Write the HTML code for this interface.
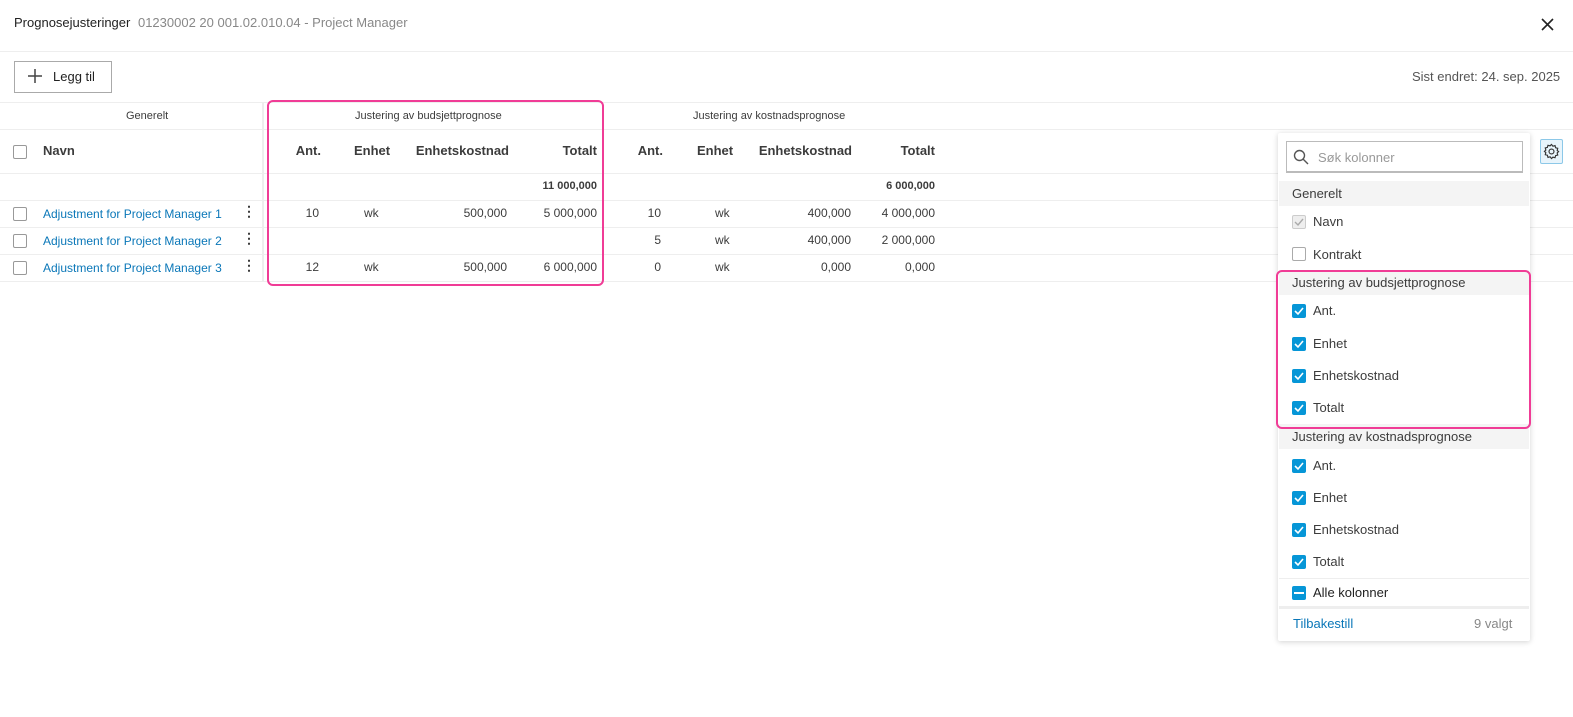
<!DOCTYPE html>
<html><head><meta charset="utf-8"><style>
*{box-sizing:border-box;margin:0;padding:0}
body{width:1573px;height:717px;background:#fff;font-family:"Liberation Sans",sans-serif;color:#3c3c3c;position:relative;overflow:hidden;font-size:12px}
.a{position:absolute;white-space:nowrap}
.hl{position:absolute;left:0;right:0;height:1px;background:#eee}
.cb{position:absolute;width:14px;height:14px;border:1px solid #999;border-radius:2px;background:#fff}
.bcb{position:absolute;left:1292px;width:14px;height:14px;border-radius:2px;background:#0696d7}
.bcb svg{position:absolute;left:2px;top:2px}
.r{text-align:right}
.b{font-weight:bold;color:#3c3c3c}
.lnk{color:#0a77b8}
.pi{position:absolute;left:1313px;font-size:13px;color:#3c3c3c}
.ph{position:absolute;left:1279px;width:250px;height:25px;background:#f4f4f4;font-size:13px;padding:5px 0 0 13px;color:#3c3c3c}
</style></head><body>
<div class="a" style="left:14px;top:15px;font-size:13px;color:#222">Prognosejusteringer <span style="color:#888;margin-left:4px">01230002 20 001.02.010.04 - Project Manager</span></div>
<svg class="a" style="left:1541px;top:18px" width="13" height="13" viewBox="0 0 13 13"><path d="M1 1L12 12M12 1L1 12" stroke="#222" stroke-width="1.6"/></svg>
<div class="hl" style="top:51px"></div>
<div class="a" style="left:14px;top:61px;width:98px;height:32px;border:1px solid #aaa;"></div>
<svg class="a" style="left:27px;top:68px" width="16" height="16"><path d="M8 1V15M1 8H15" stroke="#444" stroke-width="1.5"/></svg>
<div class="a" style="left:53px;top:69px;font-size:13px;color:#222">Legg til</div>
<div class="a" style="left:1412px;top:69px;font-size:13px;color:#555">Sist endret: 24. sep. 2025</div>
<div class="hl" style="top:102px"></div>
<div class="hl" style="top:129px"></div>
<div class="hl" style="top:173px"></div>
<div class="hl" style="top:200px"></div>
<div class="hl" style="top:227px"></div>
<div class="hl" style="top:254px"></div>
<div class="hl" style="top:281px"></div>
<div class="a" style="left:262px;top:102px;width:2px;height:179px;background:#eee"></div>
<div class="a" style="left:126px;top:110px;font-size:11px">Generelt</div>
<div class="a" style="left:355px;top:110px;font-size:11px">Justering av budsjettprognose</div>
<div class="a" style="left:693px;top:110px;font-size:11px">Justering av kostnadsprognose</div>
<div class="cb" style="left:13px;top:145px"></div>
<div class="a b" style="left:43px;top:143px;font-size:13px">Navn</div>
<div class="a b" style="right:1252px;top:143px;font-size:13px">Ant.</div>
<div class="a b" style="left:354px;top:143px;font-size:13px">Enhet</div>
<div class="a b" style="right:1064px;top:143px;font-size:13px">Enhetskostnad</div>
<div class="a b" style="right:976px;top:143px;font-size:13px">Totalt</div>
<div class="a b" style="right:910px;top:143px;font-size:13px">Ant.</div>
<div class="a b" style="left:697px;top:143px;font-size:13px">Enhet</div>
<div class="a b" style="right:721px;top:143px;font-size:13px">Enhetskostnad</div>
<div class="a b" style="right:638px;top:143px;font-size:13px">Totalt</div>
<div class="a b" style="right:976px;top:180px;font-size:11px">11 000,000</div>
<div class="a b" style="right:638px;top:180px;font-size:11px">6 000,000</div>

<div class="cb" style="left:13px;top:207px"></div>
<div class="a lnk" style="left:43px;top:207px">Adjustment for Project Manager 1</div>
<div class="a" style="left:242px;top:203px;font-size:14px;font-weight:bold">⋮</div>
<div class="a" style="right:1254px;top:206px">10</div><div class="a" style="left:364px;top:206px">wk</div><div class="a" style="right:1066px;top:206px">500,000</div><div class="a" style="right:976px;top:206px">5 000,000</div>
<div class="a" style="right:912px;top:206px">10</div><div class="a" style="left:715px;top:206px">wk</div><div class="a" style="right:722px;top:206px">400,000</div><div class="a" style="right:638px;top:206px">4 000,000</div>

<div class="cb" style="left:13px;top:234px"></div>
<div class="a lnk" style="left:43px;top:234px">Adjustment for Project Manager 2</div>
<div class="a" style="left:242px;top:230px;font-size:14px;font-weight:bold">⋮</div>
<div class="a" style="right:912px;top:233px">5</div><div class="a" style="left:715px;top:233px">wk</div><div class="a" style="right:722px;top:233px">400,000</div><div class="a" style="right:638px;top:233px">2 000,000</div>

<div class="cb" style="left:13px;top:261px"></div>
<div class="a lnk" style="left:43px;top:261px">Adjustment for Project Manager 3</div>
<div class="a" style="left:242px;top:257px;font-size:14px;font-weight:bold">⋮</div>
<div class="a" style="right:1254px;top:260px">12</div><div class="a" style="left:364px;top:260px">wk</div><div class="a" style="right:1066px;top:260px">500,000</div><div class="a" style="right:976px;top:260px">6 000,000</div>
<div class="a" style="right:912px;top:260px">0</div><div class="a" style="left:715px;top:260px">wk</div><div class="a" style="right:722px;top:260px">0,000</div><div class="a" style="right:638px;top:260px">0,000</div>

<div class="a" style="left:267px;top:100px;width:337px;height:186px;border:2px solid #f03c96;border-radius:6px"></div>

<!-- gear -->
<div class="a" style="left:1540px;top:139px;width:23px;height:25px;border:1px solid #8cc8e8;background:#e8f4fb;border-radius:2px"></div>
<svg class="a" style="left:1543px;top:143px" width="17" height="17" viewBox="0 0 24 24"><path d="M12 2l2 2.5 3-.8.8 3 3 .8-.8 3L22 12l-2 2 .8 3-3 .8-.8 3-3-.8L12 22l-2-2.5-3 .8-.8-3-3-.8.8-3L2 12l2-2-.8-3 3-.8.8-3 3 .8z" fill="none" stroke="#333" stroke-width="1.6"/><circle cx="12" cy="12" r="3.5" fill="none" stroke="#333" stroke-width="1.6"/></svg>

<!-- panel -->
<div class="a" style="left:1278px;top:133px;width:252px;height:508px;background:#fff;box-shadow:0 1px 6px rgba(0,0,0,.18);border-radius:2px"></div>
<div class="a" style="left:1286px;top:141px;width:237px;height:32px;border:1px solid #bbb;border-bottom:2px solid #bbb"></div>
<svg class="a" style="left:1293px;top:149px" width="16" height="16"><circle cx="6.5" cy="6.5" r="5" fill="none" stroke="#555" stroke-width="1.4"/><path d="M10 10L15 15" stroke="#555" stroke-width="1.4"/></svg>
<div class="a" style="left:1318px;top:150px;font-size:13px;color:#999">Søk kolonner</div>
<div class="ph" style="top:181px">Generelt</div>
<div class="cb" style="left:1292px;top:215px;background:#eee;border-color:#ccc"></div>
<svg class="a" style="left:1294px;top:217px" width="10" height="10"><path d="M1 5L4 8L9 2" fill="none" stroke="#aaa" stroke-width="1.4"/></svg>
<div class="pi" style="top:214px">Navn</div>
<div class="cb" style="left:1292px;top:247px;border-color:#aaa"></div>
<div class="pi" style="top:247px">Kontrakt</div>
<div class="ph" style="top:270px">Justering av budsjettprognose</div>
<div class="bcb" style="top:304px"><svg width="10" height="10"><path d="M1 5L4 8L9 2" fill="none" stroke="#fff" stroke-width="1.6"/></svg></div><div class="pi" style="top:303px">Ant.</div>
<div class="bcb" style="top:337px"><svg width="10" height="10"><path d="M1 5L4 8L9 2" fill="none" stroke="#fff" stroke-width="1.6"/></svg></div><div class="pi" style="top:336px">Enhet</div>
<div class="bcb" style="top:369px"><svg width="10" height="10"><path d="M1 5L4 8L9 2" fill="none" stroke="#fff" stroke-width="1.6"/></svg></div><div class="pi" style="top:368px">Enhetskostnad</div>
<div class="bcb" style="top:401px"><svg width="10" height="10"><path d="M1 5L4 8L9 2" fill="none" stroke="#fff" stroke-width="1.6"/></svg></div><div class="pi" style="top:400px">Totalt</div>
<div class="ph" style="top:424px">Justering av kostnadsprognose</div>
<div class="bcb" style="top:459px"><svg width="10" height="10"><path d="M1 5L4 8L9 2" fill="none" stroke="#fff" stroke-width="1.6"/></svg></div><div class="pi" style="top:458px">Ant.</div>
<div class="bcb" style="top:491px"><svg width="10" height="10"><path d="M1 5L4 8L9 2" fill="none" stroke="#fff" stroke-width="1.6"/></svg></div><div class="pi" style="top:490px">Enhet</div>
<div class="bcb" style="top:523px"><svg width="10" height="10"><path d="M1 5L4 8L9 2" fill="none" stroke="#fff" stroke-width="1.6"/></svg></div><div class="pi" style="top:522px">Enhetskostnad</div>
<div class="bcb" style="top:555px"><svg width="10" height="10"><path d="M1 5L4 8L9 2" fill="none" stroke="#fff" stroke-width="1.6"/></svg></div><div class="pi" style="top:554px">Totalt</div>
<div class="a" style="left:1279px;top:578px;width:250px;height:1px;background:#eee"></div>
<div class="bcb" style="top:586px"><div style="position:absolute;left:2px;top:6px;width:10px;height:2px;background:#fff"></div></div><div class="pi" style="top:585px;color:#222">Alle kolonner</div>
<div class="a" style="left:1279px;top:606px;width:250px;height:3px;background:#eee"></div>
<div class="a lnk" style="left:1293px;top:616px;font-size:13px">Tilbakestill</div>
<div class="a" style="left:1474px;top:616px;font-size:13px;color:#888">9 valgt</div>
<div class="a" style="left:1276px;top:270px;width:255px;height:159px;border:2px solid #f03c96;border-radius:6px"></div>
</body></html>
